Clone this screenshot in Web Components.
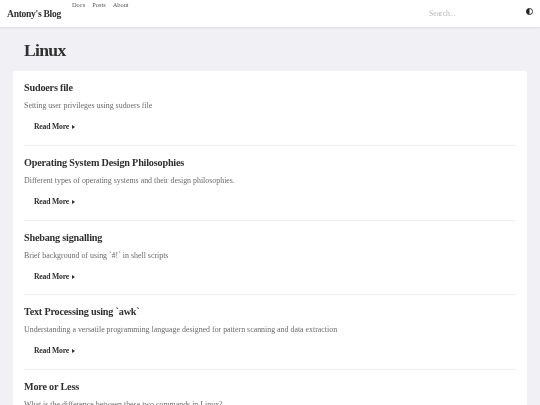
<!DOCTYPE html>
<html>
<head>
<meta charset="utf-8">
<title>Linux</title>
<style>
html, body { margin: 0; height: 405px; overflow: hidden; background: #f0f0f5; }
body { font-family: "Liberation Serif", serif; }
</style>
</head>
<body>
<blog-app></blog-app>

<template id="header-tpl">
  <style>
    :host { display: flex; height: 27px; background: #fff; box-shadow: 0 1px 2px rgba(0,0,0,0.08); box-sizing: border-box; padding: 0 7px 0 7px; position: relative; }
    .brand { width: 54px; font-size: 9.6px; letter-spacing: -0.3px; font-weight: bold; color: #2f2f37; margin-top: 8px; line-height: 12px; white-space: nowrap; filter: grayscale(1); }
    nav { display: flex; gap: 7px; margin-left: 11px; font-size: 6.4px; line-height: 9px; color: #555; filter: grayscale(1); }
    .search { margin-left: auto; margin-top: 9px; width: 97px; font-size: 7.7px; line-height: 9px; color: #b8b8be; filter: grayscale(1); }
    svg { margin-top: 8px; width: 7px; height: 7px; }
  </style>
  <div class="brand">Antony's Blog</div>
  <nav><span>Docs</span><span>Posts</span><span>About</span></nav>
  <div class="search">Search...</div>
  <svg viewBox="0 0 16 16"><circle cx="8" cy="8" r="7" fill="#fff" stroke="#222" stroke-width="2"/><path d="M8 1a7 7 0 0 0 0 14z" fill="#222"/></svg>
</template>

<template id="post-tpl">
  <style>
    :host { display: block; height: 74.7px; box-sizing: border-box; padding-top: 10px; border-bottom: 1px solid #eeeef1; }
    :host(:last-child) { border-bottom: 0; }
    h2 { margin: 0; font-size: 10.2px; letter-spacing: -0.2px; line-height: 13px; font-weight: bold; color: #2f2f37; filter: grayscale(1); }
    p { margin: 6px 0 0; font-size: 7.9px; line-height: 12px; color: #6b6b73; filter: grayscale(1); }
    a { display: flex; align-items: center; gap: 3px; margin: 9px 0 0 10px; font-size: 7.7px; letter-spacing: -0.2px; line-height: 12px; font-weight: bold; color: #2f2f37; filter: grayscale(1); }
    i { width: 0; height: 0; border-left: 3px solid #2f2f37; border-top: 2.5px solid transparent; border-bottom: 2.5px solid transparent; }
  </style>
  <h2><slot name="title"></slot></h2>
  <p><slot></slot></p>
  <a>Read More <i></i></a>
</template>

<template id="app-tpl">
  <style>
    :host { display: block; }
    main { padding: 0 13px; }
    h1 { margin: 0; padding: 13px 0 0 11px; height: 44.2px; box-sizing: border-box; font-size: 17.6px; letter-spacing: -0.7px; line-height: 20px; font-weight: bold; color: #2f2f37; filter: grayscale(1); }
    .card { background: #fff; border-radius: 2px; padding: 0 11px; height: 400px; }
  </style>
  <blog-header></blog-header>
  <main>
    <h1>Linux</h1>
    <div class="card">
      <blog-post><span slot="title">Sudoers file</span>Setting user privileges using sudoers file</blog-post>
      <blog-post><span slot="title">Operating System Design Philosophies</span>Different types of operating systems and their design philosophies.</blog-post>
      <blog-post><span slot="title">Shebang signalling</span>Brief background of using `#!` in shell scripts</blog-post>
      <blog-post><span slot="title">Text Processing using `awk`</span>Understanding a versatile programming language designed for pattern scanning and data extraction</blog-post>
      <blog-post><span slot="title">More or Less</span>What is the difference between these two commands in Linux?</blog-post>
    </div>
  </main>
</template>

<script>
function define(name, tplId) {
  customElements.define(name, class extends HTMLElement {
    constructor() {
      super();
      let shadow = this.attachShadow({mode: 'open'});
      shadow.appendChild(document.getElementById(tplId).content.cloneNode(true));
    }
  });
}
define('blog-header', 'header-tpl');
define('blog-post', 'post-tpl');
define('blog-app', 'app-tpl');
</script>
</body>
</html>
